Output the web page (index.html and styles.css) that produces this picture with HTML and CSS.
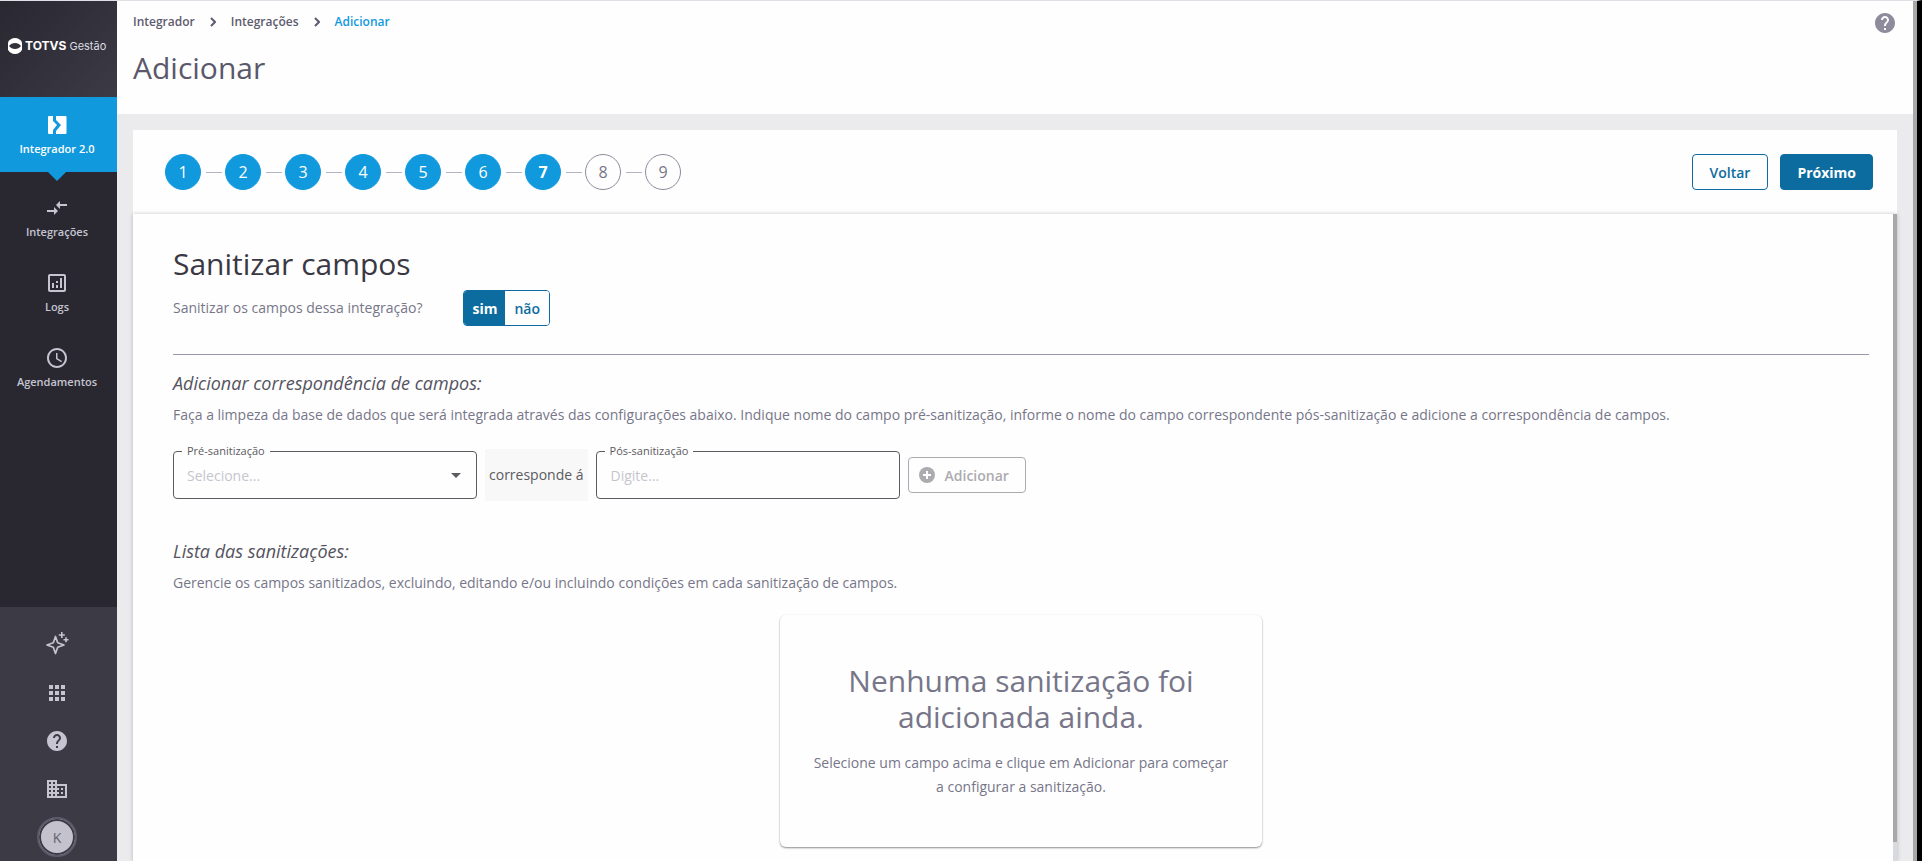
FILE: index.html
```html
<!DOCTYPE html>
<html lang="pt-BR">
  <head>
    <meta charset="UTF-8" />
    <meta name="viewport" content="width=device-width, initial-scale=1.0" />
    <title>Adicionar - Integrador</title>
    <link rel="stylesheet" href="styles.css" />
  </head>
  <body>
    <div class="app">
      <nav class="sidebar">
        <div class="logo">
          <svg class="logo-mark" viewBox="0 0 14 16" width="14" height="16">
            <path fill="#fff" d="M7 0c3.200 0 5.800 1.700 7 4.200v7.600C12.800 14.300 10.200 16 7 16s-5.800-1.700-7-4.200V4.200C1.200 1.700 3.800 0 7 0z" />
            <path fill="#32323b" d="M1 8c1.500-2 3.500-3 6-3s4.500 1 6 3c-1.500 2-3.500 3-6 3s-4.500-1-6-3z" />
          </svg>
          <span class="logo-text"><b>TOTVS</b> Gestão</span>
        </div>

        <ul class="menu">
          <li>
            <a href="#" class="menu-item active">
              <svg viewBox="0 0 24 24" width="24" height="24">
                <path d="M4 3h4v5l4 4-4 5v4H4a1 1 0 0 1-1-1V4a1 1 0 0 1 1-1z" />
                <path d="M11 3h9.500a1 1 0 0 1 1 1v16a1 1 0 0 1-1 1H11v-3l5-6-5-5z" />
              </svg>
              Integrador 2.0
            </a>
          </li>
          <li>
            <a href="#" class="menu-item">
              <svg viewBox="0 0 24 24" width="24" height="24">
                <path d="M9.010 14H2v2h7.010v3L13 15l-3.990-4v3zm5.980-1v-3H22V8h-7.010V5L11 9l3.990 4z" />
              </svg>
              Integrações
            </a>
          </li>
          <li>
            <a href="#" class="menu-item">
              <svg viewBox="0 0 24 24" width="24" height="24">
                <path d="M19 3H5c-1.100 0-2 .9-2 2v14c0 1.100.9 2 2 2h14c1.100 0 2-.9 2-2V5c0-1.100-.9-2-2-2zm0 16H5V5h14v14zM7 12h2v5H7zM15 7h2v10h-2zM11 14h2v3h-2zM11 10h2v2h-2z" />
              </svg>
              Logs
            </a>
          </li>
          <li>
            <a href="#" class="menu-item">
              <svg viewBox="0 0 24 24" width="24" height="24">
                <path d="M11.990 2C6.470 2 2 6.480 2 12s4.470 10 9.990 10C17.520 22 22 17.520 22 12S17.520 2 11.990 2zM12 20c-4.420 0-8-3.580-8-8s3.580-8 8-8 8 3.580 8 8-3.580 8-8 8zm.5-13H11v6l5.250 3.150.75-1.230-4.500-2.670z" />
              </svg>
              Agendamentos
            </a>
          </li>
        </ul>

        <div class="tools">
          <button type="button" class="tool" aria-label="Assistente">
            <svg viewBox="0 0 24 24" width="24" height="24">
              <path d="M10.500 5.500l2.200 6.300 6.300 2.200-6.300 2.200-2.200 6.300-2.200-6.300L2 14l6.300-2.200z" fill="none" stroke="currentColor" stroke-width="1.700" stroke-linejoin="round" />
              <path d="M16 1h1.600v2.200h2.200v1.600h-2.200V7H16V4.800h-2.200V3.200H16zM20.200 6.300h1.600V8h1.700v1.600h-1.700v1.700h-1.600V9.600h-1.700V8h1.700z" />
            </svg>
          </button>
          <button type="button" class="tool" aria-label="Aplicativos">
            <svg viewBox="0 0 24 24" width="24" height="24">
              <path d="M4 8h4V4H4v4zm6 12h4v-4h-4v4zm-6 0h4v-4H4v4zm0-6h4v-4H4v4zm6 0h4v-4h-4v4zm6-10v4h4V4h-4zm-6 4h4V4h-4v4zm6 6h4v-4h-4v4zm0 6h4v-4h-4v4z" />
            </svg>
          </button>
          <button type="button" class="tool" aria-label="Ajuda">
            <svg viewBox="0 0 24 24" width="24" height="24">
              <path d="M12 2C6.480 2 2 6.480 2 12s4.480 10 10 10 10-4.480 10-10S17.520 2 12 2zm1 17h-2v-2h2v2zm2.070-7.750l-.9.920C13.450 12.900 13 13.500 13 15h-2v-.5c0-1.100.45-2.100 1.170-2.830l1.240-1.260c.37-.36.590-.86.590-1.410 0-1.100-.9-2-2-2s-2 .9-2 2H8c0-2.210 1.790-4 4-4s4 1.790 4 4c0 .88-.36 1.680-.93 2.250z" />
            </svg>
          </button>
          <button type="button" class="tool" aria-label="Empresa">
            <svg viewBox="0 0 24 24" width="24" height="24">
              <path d="M12 7V3H2v18h20V7H12zM6 19H4v-2h2v2zm0-4H4v-2h2v2zm0-4H4V9h2v2zm0-4H4V5h2v2zm4 12H8v-2h2v2zm0-4H8v-2h2v2zm0-4H8V9h2v2zm0-4H8V5h2v2zm10 12h-8v-2h2v-2h-2v-2h2v-2h-2V9h8v10zm-2-8h-2v2h2v-2zm0 4h-2v2h2v-2z" />
            </svg>
          </button>
          <button type="button" class="avatar">K</button>
        </div>
      </nav>

      <main class="main">
        <header class="page-header">
          <div>
            <nav class="breadcrumb">
              <a href="#">Integrador</a>
              <svg viewBox="0 0 6 10" width="6" height="10"><path d="M1 1l4 4-4 4" /></svg>
              <a href="#">Integrações</a>
              <svg viewBox="0 0 6 10" width="6" height="10"><path d="M1 1l4 4-4 4" /></svg>
              <a href="#" class="current">Adicionar</a>
            </nav>
            <h1>Adicionar</h1>
          </div>
          <button type="button" class="help-btn" aria-label="Ajuda">
            <svg viewBox="0 0 24 24" width="24" height="24">
              <path d="M12 2C6.480 2 2 6.480 2 12s4.480 10 10 10 10-4.480 10-10S17.520 2 12 2zm1 17h-2v-2h2v2zm2.070-7.750l-.9.920C13.450 12.900 13 13.500 13 15h-2v-.5c0-1.100.45-2.100 1.170-2.830l1.240-1.260c.37-.36.590-.86.590-1.410 0-1.100-.9-2-2-2s-2 .9-2 2H8c0-2.210 1.790-4 4-4s4 1.790 4 4c0 .88-.36 1.680-.93 2.250z" />
            </svg>
          </button>
        </header>

        <div class="content">
          <div class="stepper-bar">
            <ol class="stepper">
              <li class="step done">1</li>
              <li class="step done">2</li>
              <li class="step done">3</li>
              <li class="step done">4</li>
              <li class="step done">5</li>
              <li class="step done">6</li>
              <li class="step done current">7</li>
              <li class="step">8</li>
              <li class="step">9</li>
            </ol>
            <div class="actions">
              <button type="button" class="btn">Voltar</button>
              <button type="button" class="btn btn-primary">Próximo</button>
            </div>
          </div>

          <div class="panel">
            <div class="panel-body">
              <h2>Sanitizar campos</h2>
              <div class="question">
                <p>Sanitizar os campos dessa integração?</p>
                <div class="toggle">
                  <button type="button" class="selected">sim</button>
                  <button type="button">não</button>
                </div>
              </div>

              <section class="block">
                <h3>Adicionar correspondência de campos:</h3>
                <p>Faça a limpeza da base de dados que será integrada através das configurações abaixo. Indique nome do campo pré-sanitização, informe o nome do campo correspondente pós-sanitização e adicione a correspondência de campos.</p>
                <form class="match-form">
                  <fieldset class="field">
                    <legend><label for="pre">Pré-sanitização</label></legend>
                    <select id="pre" name="pre">
                      <option value="">Selecione...</option>
                    </select>
                    <svg class="caret" viewBox="0 0 10 5" width="10" height="5"><path d="M0 0h10L5 5z" /></svg>
                  </fieldset>
                  <span class="joiner">corresponde á</span>
                  <fieldset class="field">
                    <legend><label for="pos">Pós-sanitização</label></legend>
                    <input type="text" id="pos" name="pos" placeholder="Digite..." />
                  </fieldset>
                  <button type="button" class="btn btn-add" disabled>
                    <svg viewBox="0 0 16 16" width="16" height="16">
                      <circle cx="8" cy="8" r="8" />
                      <path d="M8 4v8M4 8h8" stroke="#fff" stroke-width="2" />
                    </svg>
                    Adicionar
                  </button>
                </form>
              </section>

              <section class="list">
                <h3>Lista das sanitizações:</h3>
                <p>Gerencie os campos sanitizados, excluindo, editando e/ou incluindo condições em cada sanitização de campos.</p>
                <div class="empty">
                  <h2>Nenhuma sanitização foi adicionada ainda.</h2>
                  <p>Selecione um campo acima e clique em Adicionar para começar a configurar a sanitização.</p>
                </div>
              </section>
            </div>
            <div class="panel-scroll"><div class="thumb"></div></div>
          </div>
        </div>
      </main>
    </div>
  </body>
</html>
```
FILE: styles.css
```css
* {
  box-sizing: border-box;
}
body {
  margin: 0;
  font-family: "Open Sans", "Noto Sans", sans-serif;
  font-size: 14px;
  line-height: 24px;
  color: #777689;
  background-color: #ebebed;
}
h1,
h2,
h3,
p,
ul,
ol {
  margin: 0;
  padding: 0;
}
ul,
ol {
  list-style: none;
}
a {
  color: inherit;
  text-decoration: none;
}
button,
input,
select {
  font-family: inherit;
  font-size: 14px;
  cursor: pointer;
}
svg {
  fill: currentColor;
  flex-shrink: 0;
}
.app {
  display: flex;
  height: 100vh;
  border-top: 1px solid #e0e0e6;
  border-right: 5px solid #000;
  overflow: hidden;
}

/* sidebar */
.sidebar {
  display: flex;
  flex-direction: column;
  width: 117px;
  flex-shrink: 0;
  background-color: #292831;
  color: #c5c4d0;
}
.logo {
  display: flex;
  align-items: center;
  gap: 3px;
  height: 96px;
  padding: 0 8px 6px;
  background: linear-gradient(135deg, #292831, #3c3a45);
  flex-shrink: 0;
}
.logo-text {
  font-family: Inter, sans-serif;
  font-size: 11px;
  line-height: 16px;
  white-space: nowrap;
  color: #dcdce2;
}
.logo-text b {
  font-size: 12px;
  color: #fff;
}
.menu-item {
  position: relative;
  display: flex;
  flex-direction: column;
  align-items: center;
  height: 75px;
  padding: 16px 3px 0 0;
  font-size: 11px;
  font-weight: 600;
}
.menu-item.active {
  margin-bottom: 8px;
  background-color: #1199de;
  color: #fff;
}
.menu-item.active::after {
  content: "";
  position: absolute;
  top: 100%;
  left: 48px;
  border: 9px solid transparent;
  border-top-color: #1199de;
  border-bottom: 0;
}
.tools {
  display: flex;
  flex-direction: column;
  align-items: center;
  margin-top: auto;
  padding: 12px 3px 4px 0;
  background-color: #3c3a45;
}
.tool {
  display: flex;
  align-items: center;
  justify-content: center;
  width: 48px;
  height: 48px;
  padding: 0;
  border: none;
  background: none;
  color: #c5c4d0;
}
.tool:first-child {
  margin-bottom: 2px;
}
.avatar {
  width: 40px;
  height: 40px;
  margin-top: 4px;
  border: 2px solid #5b5a6b;
  border-radius: 50%;
  padding: 0;
  background-color: #c3c2cd;
  box-shadow: inset 0 0 0 2px #3c3a45;
  color: #63616f;
}

/* header */
.main {
  display: flex;
  flex-direction: column;
  flex: 1;
  min-width: 0;
  border-right: 4px solid #a8a8a8;
}
.page-header {
  display: flex;
  justify-content: space-between;
  align-items: flex-start;
  padding: 9px 16px 28px;
  background-color: #fefefe;
}
.breadcrumb {
  display: flex;
  align-items: center;
  gap: 15px;
  height: 24px;
  font-size: 12px;
  font-weight: 600;
  color: #5d5b6e;
}
.breadcrumb svg {
  fill: none;
  stroke: #5d5b6e;
  stroke-width: 2;
}
.breadcrumb .current {
  color: #1199de;
}
h1,
h2 {
  font-size: 30px;
  line-height: 36px;
  font-weight: 400;
}
h1 {
  margin-top: 16px;
  color: #5a586b;
}
.help-btn {
  display: flex;
  padding: 1px 0;
  border: none;
  background: none;
  color: #8d8b9c;
}

/* stepper */
.content {
  display: flex;
  flex-direction: column;
  flex: 1;
  min-height: 0;
  padding: 16px 16px 0;
}
.stepper-bar {
  display: flex;
  justify-content: space-between;
  align-items: center;
  padding: 24px 24px 24px 32px;
  background-color: #fefefe;
}
.stepper {
  display: flex;
}
.step {
  position: relative;
  display: flex;
  align-items: center;
  justify-content: center;
  width: 36px;
  height: 36px;
  margin-right: 24px;
  border: 1px solid #8d8b9c;
  border-radius: 50%;
  font-size: 16px;
}
.step + .step::before {
  content: "";
  position: absolute;
  right: 38px;
  top: 17px;
  width: 16px;
  height: 1px;
  background-color: #b4b3c0;
}
.step.done {
  border-color: #1199de;
  background-color: #1199de;
  color: #fff;
  font-weight: 500;
}
.step.current {
  font-weight: 700;
}
.actions {
  display: flex;
  gap: 12px;
}
.btn {
  height: 36px;
  padding: 0 17px;
  border: 1px solid #0d6c9f;
  border-radius: 4px;
  background-color: #fefefe;
  color: #0d6c9f;
  font-weight: 600;
}
.btn-primary {
  padding: 0 16px;
  background-color: #0d6c9f;
  color: #fff;
  font-weight: 700;
}

/* panel */
.panel {
  display: flex;
  flex: 1;
  min-height: 0;
  background-color: #fefefe;
  box-shadow: 0 0 4px rgba(60, 58, 80, 0.3);
}
.panel-body {
  flex: 1;
  min-width: 0;
  padding: 32px 24px 0 40px;
}
.panel-body > h2 {
  color: #3a3843;
}
.panel-scroll {
  width: 4px;
  background-color: #d9d9e0;
}
.thumb {
  height: 97%;
  background-color: #a8a8a8;
}
.question {
  display: flex;
  align-items: center;
  gap: 41px;
  padding: 8px 0 28px;
  border-bottom: 1px solid #9997ac;
}
.toggle {
  display: flex;
  border: 1px solid #0d6c9f;
  border-radius: 4px;
  overflow: hidden;
}
.toggle button {
  height: 34px;
  padding: 0 9px;
  border: none;
  background-color: #fefefe;
  color: #0d6c9f;
  font-weight: 600;
}
.toggle .selected {
  padding: 0 8px;
  background-color: #0d6c9f;
  color: #fff;
  font-weight: 700;
}
h3 {
  margin-bottom: 8px;
  font-size: 18px;
  line-height: 24px;
  font-style: italic;
  font-weight: 400;
  color: #55535f;
}
.block {
  padding-top: 16px;
}
.match-form {
  display: flex;
  align-items: center;
  gap: 8px;
  margin-top: 16px;
}
.field {
  position: relative;
  width: 304px;
  height: 56px;
  min-width: 0;
  margin: 0 0 8px;
  padding: 0 13px;
  border: 1px solid #5b5a60;
  border-radius: 4px;
}
.field legend {
  margin-left: -5px;
  padding: 0 5px;
  font-size: 11px;
  line-height: 16px;
  color: #5b5a60;
}
.field select,
.field input {
  display: block;
  width: 100%;
  height: 32px;
  padding: 0;
  border: none;
  outline: none;
  appearance: none;
  background: none;
  color: #c6c5ce;
}
.field input {
  padding-left: 1px;
}
.field input::placeholder {
  color: #c6c5ce;
}
.caret {
  position: absolute;
  right: 15px;
  top: 14px;
  color: #5b5a60;
}
.joiner {
  padding: 14px 4px;
  background-color: #f8f8f8;
  color: #5b5a60;
}
.btn-add {
  display: flex;
  align-items: center;
  gap: 10px;
  padding: 0 16px 0 10px;
  border-color: #acabb0;
  color: #acabb0;
}
.list {
  padding-top: 32px;
}
.empty {
  max-width: 482px;
  margin: 20px auto 0;
  padding: 48px 32px;
  border-radius: 6px;
  box-shadow: 0 1px 2px rgba(0, 0, 0, 0.45);
  text-align: center;
}
.empty p {
  margin-top: 16px;
}
```
